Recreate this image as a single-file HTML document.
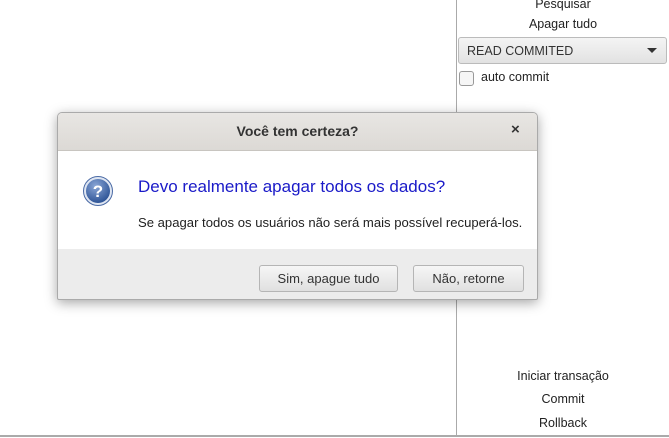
<!DOCTYPE html>
<html><head><meta charset="utf-8"><style>
body{margin:0;width:669px;height:438px;background:#fff;position:relative;overflow:hidden;font-family:"Liberation Sans","DejaVu Sans",sans-serif;font-size:12.5px;color:#222}
.a{position:absolute}
.c{text-align:center;width:212px;left:457px}
</style></head><body>
<div class="a" style="left:456px;top:0;width:1px;height:436px;background:#aaa"></div>
<div class="a" style="left:0;top:435px;width:669px;height:2px;background:#aaa"></div>
<div class="a c" style="top:-3px">Pesquisar</div>
<div class="a c" style="top:17px">Apagar tudo</div>
<div class="a" style="left:458px;top:37px;width:209px;height:27px;border:1px solid #bbb;border-radius:3px;background:linear-gradient(#f4f4f4,#e2e2e2);box-sizing:border-box"></div>
<div class="a" style="left:467px;top:44px;color:#333">READ COMMITED</div>
<div class="a" style="left:647px;top:48px;width:0;height:0;border-left:5px solid transparent;border-right:5px solid transparent;border-top:5px solid #333"></div>
<div class="a" style="left:459px;top:71px;width:13px;height:13px;border:1px solid #999;border-radius:3px;background:#f6f6f6"></div>
<div class="a" style="left:481px;top:70px">auto commit</div>
<div class="a c" style="top:369px">Iniciar transação</div>
<div class="a c" style="top:392px">Commit</div>
<div class="a c" style="top:416px">Rollback</div>

<div class="a" style="left:57px;top:112px;width:481px;height:188px;border:1px solid #aaa;border-radius:5px 5px 2px 2px;box-shadow:0 3px 12px rgba(0,0,0,.35);overflow:hidden;box-sizing:border-box;background:#ececec">
 <div class="a" style="left:0;top:0;width:100%;height:37px;background:linear-gradient(#e8e6e3,#dcd9d5);border-bottom:1px solid #c8c5c0"></div>
 <div class="a" style="left:0;top:10px;width:100%;text-align:center;font-weight:bold;font-size:14px;color:#333">Você tem certeza?</div>
 <div class="a" style="left:453px;top:8px;font-weight:bold;font-size:15px;color:#333">×</div>
 <div class="a" style="left:0;top:38px;width:100%;height:98px;background:#fff"></div>
 <svg class="a" style="left:24px;top:62px" width="32" height="32" viewBox="0 0 32 32"><defs><radialGradient id="g" cx="40%" cy="30%" r="70%"><stop offset="0" stop-color="#8aa6d6"/><stop offset="1" stop-color="#2f5597"/></radialGradient></defs><circle cx="16" cy="16" r="14.5" fill="#dfe6f2" stroke="#4a6aa5" stroke-width="1"/><circle cx="16" cy="16" r="12" fill="url(#g)"/><text x="16" y="22" text-anchor="middle" font-family="Liberation Sans" font-weight="bold" font-size="17" fill="#fff">?</text></svg>
 <div class="a" style="left:80px;top:64px;font-size:17px;color:#1a1ac8">Devo realmente apagar todos os dados?</div>
 <div class="a" style="left:80px;top:102px;font-size:13.1px;color:#222">Se apagar todos os usuários não será mais possível recuperá-los.</div>
 <div class="a" style="left:201px;top:152px;width:139px;height:27px;border:1px solid #b5b5b5;border-radius:3px;background:linear-gradient(#f6f6f6,#e0e0e0);box-sizing:border-box;text-align:center;line-height:25px;font-size:13px;color:#333">Sim, apague tudo</div>
 <div class="a" style="left:355px;top:152px;width:111px;height:27px;border:1px solid #b5b5b5;border-radius:3px;background:linear-gradient(#f6f6f6,#e0e0e0);box-sizing:border-box;text-align:center;line-height:25px;font-size:13px;color:#333">Não, retorne</div>
</div>
</body></html>
